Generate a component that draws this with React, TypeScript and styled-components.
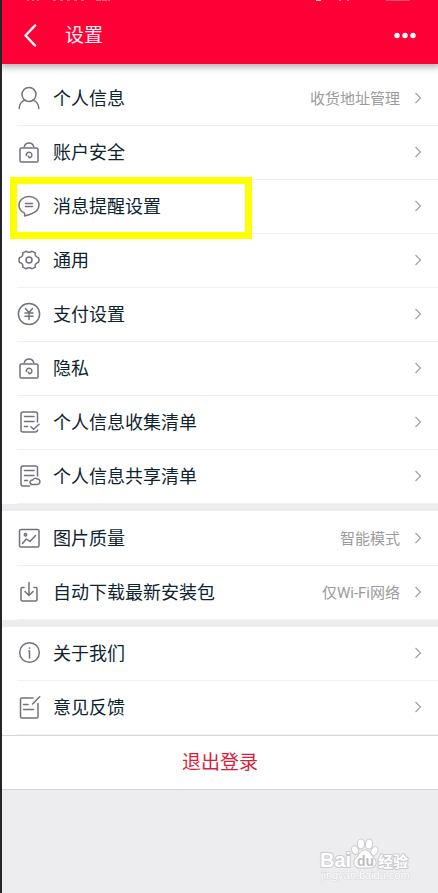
import React from "react";
import styled, { createGlobalStyle } from "styled-components";

const GlobalStyle = createGlobalStyle`
  *, *::before, *::after { box-sizing: border-box; }
  body {
    margin: 0;
    background: #ededef;
    font-family: Roboto, "Noto Sans CJK SC", sans-serif;
    color: #0d2430;
  }
  #root { min-height: 100vh; display: flex; }
`;

const Page = styled.div`
  flex: 1;
  min-width: 0;
  display: flex;
  flex-direction: column;
  border-left: 2px solid #252529;
`;

const Header = styled.header`
  position: relative;
  z-index: 1;
  background: #ff0036;
  box-shadow: 0 1px 7px 2px rgba(0, 0, 0, 0.32);
  clip-path: inset(0 0 -12px 0);
`;

const StatusBar = styled.svg`
  display: block;
  width: 100%;
  height: 8px;
`;

const TitleBar = styled.div`
  display: flex;
  align-items: center;
  height: 56px;
  padding: 0 17px 0 12px;
`;

const IconButton = styled.button`
  display: flex;
  align-items: center;
  justify-content: center;
  width: 32px;
  height: 32px;
  padding: 0;
  border: 0;
  background: none;
  color: #fff;
  cursor: pointer;
`;

const Title = styled.h1`
  flex: 1;
  margin: 0 0 0 19px;
  font-size: 19px;
  line-height: 28px;
  font-weight: 400;
  color: #fff0f3;
`;

const Groups = styled.main`
  display: flex;
  flex-direction: column;
  gap: 7px;
`;

const Group = styled.ul`
  margin: 0;
  padding: 1px 0 0;
  list-style: none;
  background: #fff;

  &:first-child { padding-top: 8px; }
  &:last-child { padding-top: 0; }
`;

const Item = styled.li`
  position: relative;
`;

const RowLink = styled.a`
  display: flex;
  align-items: center;
  height: 54px;
  margin-left: 15px;
  padding-right: 16px;
  border-bottom: 1px solid #f1f1f2;
  color: inherit;
  text-decoration: none;
`;

const Glyph = styled.svg`
  flex: none;
  width: 24px;
  height: 24px;
  margin-bottom: 2px;
  fill: none;
  stroke: #70727d;
  stroke-width: 1.5;
  stroke-linecap: round;
  stroke-linejoin: round;
`;

const Label = styled.span`
  flex: 1;
  margin-left: 12px;
  font-size: 18px;
  line-height: 26px;
`;

const Value = styled.span`
  margin-right: 14px;
  font-size: 15px;
  line-height: 22px;
  color: #9b9b9d;
`;

const Chevron = styled.svg`
  flex: none;
  width: 8px;
  height: 12px;
  margin-bottom: 2px;
  fill: none;
  stroke: #a2a2a6;
  stroke-width: 1.2;
`;

const Highlight = styled.span`
  position: absolute;
  top: -3px;
  left: 8px;
  width: 242px;
  height: 62px;
  border: 7px solid #ffff00;
  pointer-events: none;
  z-index: 1;
`;

const Logout = styled.button`
  height: 55px;
  padding: 1px 0 0;
  border: 0;
  border-top: 1px solid #d5d5d7;
  border-bottom: 1px solid #d5d5d7;
  background: #fff;
  color: #dc1c3a;
  font-family: inherit;
  font-size: 19px;
  line-height: 28px;
  cursor: pointer;
`;

const Footer = styled.footer`
  flex: 1;
  display: flex;
  align-items: flex-end;
  justify-content: flex-end;
  padding: 0 25px 8px 0;
`;

const Watermark = styled.svg`
  width: 96px;
  height: 48px;
  font-family: "Liberation Sans", "Noto Sans CJK SC", sans-serif;
  paint-order: stroke;
  stroke-linejoin: round;
`;

type IconName =
  | "user" | "lock" | "message" | "gear" | "yen" | "checklist"
  | "share" | "image" | "download" | "info" | "edit";

const icons: Record<IconName, React.ReactNode> = {
  user: (
    <>
      <circle cx="12" cy="8.5" r="7" />
      <path d="M2.2 22.5c.2-4 2.2-7.2 5.8-8.4M21.8 22.5c-.2-4-2.2-7.2-5.8-8.4" />
    </>
  ),
  lock: (
    <>
      <rect x="3" y="8" width="18" height="14" rx="1.5" />
      <path d="M7.3 6.5a4.9 4.9 0 0 1 9.4 0" />
      <path d="M9.3 15.5a2.8 2.8 0 1 1 3.2 2.3M12.5 17.8l-1.2-1.6" />
    </>
  ),
  message: (
    <>
      <path d="M7.2 18.9C4 17.4 2 14.8 2 11.2 2 6.2 6.3 2.5 12 2.5s10 3.7 10 8.5c0 4.4-3.8 7.7-8.8 9.2-1.7.6-3.8 1.1-5.7 1.7.5-1 .4-2-.3-3Z" />
      <path d="M8.5 9.5h7M8.5 12.5h7" />
    </>
  ),
  gear: (
    <>
      <path d="M9.2 3.2c1.3 1.4 4.3 1.4 5.6 0l3.5 1.7c-.7 2.1.6 4.2 3 4.6.9 1.5.9 3.5 0 5-2.4.4-3.7 2.5-3 4.6l-3.5 1.7c-1.3-1.4-4.3-1.4-5.6 0l-3.5-1.7c.7-2.1-.6-4.2-3-4.6-.9-1.5-.9-3.5 0-5 2.4-.4 3.7-2.5 3-4.6Z" />
      <circle cx="12" cy="12" r="3" />
    </>
  ),
  yen: (
    <>
      <circle cx="12" cy="12" r="10.6" />
      <path d="m8.5 6.5 3.5 4 3.5-4M8 11h8M8 14.2h8M12 10.5v7" />
    </>
  ),
  checklist: (
    <>
      <path d="M20.5 12V4a2 2 0 0 0-2-2H6a2 2 0 0 0-2 2v16a2 2 0 0 0 2 2h12c1.5 0 2.4-.7 2.5-2" />
      <path d="M7.5 6.5h9.5M7.5 11.5h9.5M7.5 16.5h3M14 16.8l2.5 2.4 5.5-5" />
    </>
  ),
  share: (
    <>
      <path d="M20.5 12V4a2 2 0 0 0-2-2H6a2 2 0 0 0-2 2v16a2 2 0 0 0 2 2h6.5" />
      <path d="M7.5 6.5h9.5M7.5 11.5h9.5M7.5 16.5h3" />
      <path d="M15.5 20.5a2.3 2.3 0 1 1 .4-4.5c.8-1.8 3.1-2.2 4.5-.9 1.8.1 2.7 1.5 2.5 2.9-.2 1.6-1.5 2.5-3.1 2.5Z" />
    </>
  ),
  image: (
    <>
      <rect x="2.5" y="3.5" width="19.5" height="17.5" rx="1.5" />
      <circle cx="8.5" cy="8.8" r="1.2" />
      <path d="m5.5 17.5 3.8-4.5 3.7 2.5 5.5-6" />
    </>
  ),
  download: (
    <>
      <path d="M7 7.5H5.5A1.5 1.5 0 0 0 4 9v10.5A1.5 1.5 0 0 0 5.5 21h13a1.5 1.5 0 0 0 1.5-1.5V9a1.5 1.5 0 0 0-1.5-1.5H17" />
      <path d="M12 2.5V15M8 11.5l4 4 4-4" />
    </>
  ),
  info: (
    <>
      <circle cx="12.5" cy="11.5" r="9.8" />
      <path d="M12.5 7v.3M11.8 10h.7v7" />
    </>
  ),
  edit: (
    <>
      <path d="M16 3H5a1.5 1.5 0 0 0-1.5 1.5v17A1.5 1.5 0 0 0 5 23h14.5a1.5 1.5 0 0 0 1.5-1.5v-13" />
      <path d="m15.5 9 7.2-7.2M6.5 9.5H11M6.5 14.5h10" />
    </>
  ),
};

interface RowData {
  icon: IconName;
  label: string;
  value?: string;
  marked?: boolean;
}

const groups: RowData[][] = [
  [
    { icon: "user", label: "个人信息", value: "收货地址管理" },
    { icon: "lock", label: "账户安全" },
    { icon: "message", label: "消息提醒设置", marked: true },
    { icon: "gear", label: "通用" },
    { icon: "yen", label: "支付设置" },
    { icon: "lock", label: "隐私" },
    { icon: "checklist", label: "个人信息收集清单" },
    { icon: "share", label: "个人信息共享清单" },
  ],
  [
    { icon: "image", label: "图片质量", value: "智能模式" },
    { icon: "download", label: "自动下载最新安装包", value: "仅Wi-Fi网络" },
  ],
  [
    { icon: "info", label: "关于我们" },
    { icon: "edit", label: "意见反馈" },
  ],
];

function SettingRow({ icon, label, value, marked }: RowData) {
  return (
    <Item>
      <RowLink href="#">
        <Glyph viewBox="0 0 24 24" aria-hidden="true">{icons[icon]}</Glyph>
        <Label>{label}</Label>
        {value && <Value>{value}</Value>}
        <Chevron viewBox="0 0 8 12" aria-hidden="true">
          <path d="m1.5 1 5 5-5 5" />
        </Chevron>
      </RowLink>
      {marked && <Highlight />}
    </Item>
  );
}

export default function App() {
  return (
    <>
      <GlobalStyle />
      <Page>
        <Header>
          <StatusBar aria-hidden="true">
            <g stroke="#ff9caf" strokeWidth="1" opacity="0.7">
              <path d="M25 .5h14" strokeDasharray="2 3" />
              <path d="M51 .5h33" strokeDasharray="3 4" />
              <path d="M94 .5h14" strokeDasharray="5 1" />
            </g>
            <svg x="100%" overflow="visible">
              <path d="M-122 .5h5" stroke="#ffd0d9" />
              <path d="M-99 .5h2M-91 .5h2" stroke="#ff8095" />
              <path d="M-52 .5h24" stroke="#e8536f" />
            </svg>
          </StatusBar>
          <TitleBar>
            <IconButton type="button" aria-label="返回">
              <svg width="20" height="24" viewBox="0 0 20 24" fill="none" stroke="currentColor" strokeWidth="2.5" strokeLinecap="round" strokeLinejoin="round" aria-hidden="true">
                <path d="M15 1.5 5.5 11.500l9.5 10" />
              </svg>
            </IconButton>
            <Title>设置</Title>
            <IconButton type="button" aria-label="更多">
              <svg width="24" height="8" viewBox="0 0 24 8" fill="currentColor" aria-hidden="true">
                <circle cx="4" cy="3.5" r="2.7" />
                <circle cx="12" cy="3.5" r="2.7" />
                <circle cx="20" cy="3.5" r="2.7" />
              </svg>
            </IconButton>
          </TitleBar>
        </Header>
        <Groups>
          {groups.map((rows, index) => (
            <Group key={index}>
              {rows.map((row) => (
                <SettingRow key={row.label} {...row} />
              ))}
            </Group>
          ))}
        </Groups>
        <Logout type="button">退出登录</Logout>
        <Footer>
          <Watermark viewBox="0 0 96 48" role="img" aria-label="Baidu 经验">
            <g fill="#fff" stroke="#cacacd" strokeWidth="2">
              <text x="3" y="30" fontSize="20" fontWeight="700">Bai</text>
              <ellipse cx="38" cy="13" rx="2.8" ry="4" transform="rotate(-20 38 13)" />
              <ellipse cx="44" cy="7" rx="3" ry="4.4" />
              <ellipse cx="52" cy="7" rx="3" ry="4.4" transform="rotate(10 52 7)" />
              <ellipse cx="57.5" cy="14" rx="2.8" ry="4" transform="rotate(25 57.5 14)" />
              <path d="M48 13.5c4.500 0 5.5 4.500 8.5 7.500 4 4 2 9.500-3 9.500h-11c-5 0-7-5.500-3-9.500 3-3 4-7.500 8.500-7.500Z" />
              <text x="61" y="30" fontSize="15" fontWeight="700">经验</text>
            </g>
            <text x="40" y="29" fontSize="14" fontWeight="700" fill="#bebec2">du</text>
            <text x="4" y="42" fontSize="11" fill="#fff" stroke="#d6d6d8" strokeWidth="1">jingyan.baidu.com</text>
          </Watermark>
        </Footer>
      </Page>
    </>
  );
}
